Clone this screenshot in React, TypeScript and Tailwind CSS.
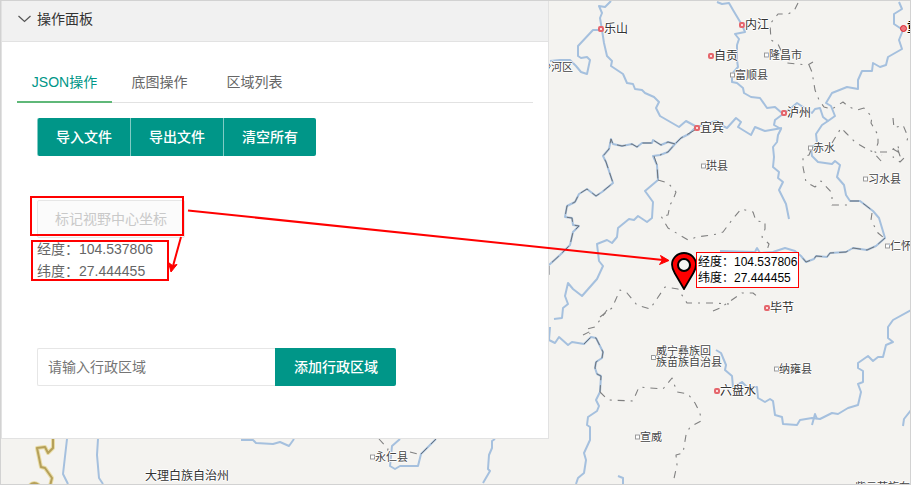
import { useState } from 'react';
import clsx from 'clsx';

type Place = { name: string; x: number; y: number; kind: 'city' | 'county' | 'capital' | 'plain'; size?: 'sm' };

// x / y is the left edge and the vertical centre of the label
const places: Place[] = [
  { name: '乐山', x: 598, y: 29, kind: 'city' },
  { name: '内江', x: 739, y: 25, kind: 'city' },
  { name: '自贡', x: 708, y: 56, kind: 'city' },
  { name: '宜宾', x: 694, y: 128, kind: 'city' },
  { name: '泸州', x: 781, y: 113, kind: 'city' },
  { name: '毕节', x: 764, y: 308, kind: 'city' },
  { name: '六盘水', x: 714, y: 391, kind: 'city' },
  { name: '重庆', x: 900, y: 28, kind: 'capital' },
  { name: '隆昌市', x: 764, y: 55, kind: 'county' },
  { name: '富顺县', x: 730, y: 75, kind: 'county' },
  { name: '赤水', x: 808, y: 148, kind: 'county' },
  { name: '习水县', x: 863, y: 179, kind: 'county' },
  { name: '珙县', x: 701, y: 166, kind: 'county' },
  { name: '仁怀', x: 885, y: 246, kind: 'county' },
  { name: '纳雍县', x: 774, y: 369, kind: 'county' },
  { name: '宣威', x: 635, y: 437, kind: 'county' },
  { name: '永仁县', x: 370, y: 457, kind: 'county' },
  { name: '威宁彝族回\n族苗族自治县', x: 651, y: 357, kind: 'county' },
  { name: '沙河区', x: 540, y: 67, kind: 'plain', size: 'sm' },
  { name: '大理白族自治州', x: 145, y: 476, kind: 'plain' },
  { name: '紫云苗族布', x: 855, y: 487, kind: 'plain', size: 'sm' },
];

const rivers = [
  '611,1 605,7 599,6 602,13 600,18 602,30 604,43 607,56 612,61 611,66 623,74 627,83 633,84 635,89 642,90 645,93 654,97 659,102 656,108 660,116 679,127 686,121 697,127 708,123 717,121 723,126 727,128 736,118 741,122 738,127 751,135 755,127 765,131 782,128',
  '601,30 593,30 578,46 578,56 581,58 587,57 590,60 587,74 581,72 576,66 570,60 560,60 550,61',
  '695,128 689,134 681,138 675,144 668,152 660,155 653,156 657,165 658,180 645,191 653,202 652,218 647,222 638,216 634,220 629,219 618,228 617,237 612,243 607,240 597,244 599,261 603,266 597,279 582,296 573,289 568,283 565,296 568,304 563,308 562,318 554,319',
  '717,2 722,4 729,3 733,10 742,25 745,32 735,34 739,39 737,45 737,60 738,67 732,74 732,82 737,83 743,88 744,93 751,97 760,98 767,108 775,107 783,114',
  '783,114 790,109 797,103 803,107 812,113 815,109 820,108 823,117 828,121 835,116 831,106 826,103 832,93 847,87 858,89 858,80 862,71 872,71 873,63 880,67 886,65 888,57 902,49 899,40 903,30 894,24 894,14 902,9 899,2',
  '828,121 822,125 816,134 817,143 811,149 812,156 818,162 832,164 835,161 840,165 837,177 844,185 846,195 850,201 860,201 873,211 879,218 885,238 876,246 867,250 853,248 846,252 830,253 827,257 816,256 814,259 806,262 801,256 795,251 785,248 773,252 760,253 757,248 755,252 720,251',
  '783,114 775,120 774,125 781,129 778,135 777,142 773,147 774,157 773,167 779,172 778,178 783,182 779,190 786,204 789,219',
  '550,327 549,340 555,343 559,337 568,345 572,342 584,344 591,337 596,338 603,352 602,358 596,362 595,368 597,374 601,376 600,392 596,400 599,406 597,411 588,417 587,425 590,427 590,440 584,453 586,460 584,473 578,478 576,484',
  '618,476 623,478 623,484',
  '716,350 721,353 726,365 725,370 732,376 733,387 742,382 747,387 757,387 758,398 765,402 770,399 773,401 775,415 782,417 783,424 797,425 800,420 812,418 820,419 832,413 838,414 848,408 858,405 861,392 858,384 863,382 863,371 858,368 858,363 868,356 873,361 878,357 883,357 886,345 893,342 888,338 888,327 893,320 911,310',
  '812,425 815,414 817,419',
  '911,410 904,419 903,426',
  '67,439 63,474 68,484',
  '98,439 97,455 99,478 103,484',
  '241,440 253,440 256,443 273,444 280,442 289,446 294,439',
  '400,439 392,446 390,466 395,469 400,466 418,466 421,454 436,439',
  '495,439 492,441 492,448 489,455 488,469 490,471 483,483',
  '675,144 668,142 661,145 653,140 652,143 642,143 637,147 632,144 622,146 613,144 611,139 609,149 603,156 606,162 613,183 602,192 596,196 587,189 579,194 575,202 567,206 565,217 572,218 573,225 579,226 573,232 570,245 560,255 549,265',
];

// administrative borders that run along a river
const riverBorders = [
  '675,144 668,142 661,145 653,140 652,143 642,143 637,147 632,144 622,146 613,144 611,139 609,149 603,156 606,162 613,183 602,192 596,196 587,189 579,194 575,202 567,206 565,217 572,218 573,225 579,226 573,232 570,245 560,255 549,265 549,275',
  '695,130 681,138 675,144 668,152 660,155',
  '850,201 860,201 873,211',
  '885,238 876,246 867,250 853,248 846,252 830,253 827,257 816,256 814,259 806,262 801,256',
  '584,344 591,337 596,338 603,352 602,358 596,362 595,368 597,374 601,376 600,392',
  '654,156 657,165 658,180',
  '421,454 436,439',
];

const borders = [
  '798,3 794,11 788,14 778,14 770,24 771,40 778,44 787,63 808,65 813,62',
  '809,65 812,72 815,90 819,100 824,107 832,109 843,102 849,107 857,110 864,108 872,117 871,123 878,135 878,143 875,152 882,155',
  '811,150 809,155 803,157 803,167 806,182 815,187 821,181 832,193 832,205 848,205',
  '832,143 841,128 846,133 855,142 865,148 873,152 882,162',
  '893,118 894,128 903,125 908,137 906,144',
  '880,152 888,152 897,147 900,156 893,157 900,162 908,154',
  '893,149 900,153 897,143',
  '872,213 871,220 878,233 884,238',
  '658,180 668,183 676,192 673,200 670,205 668,215 661,216 668,228 688,240 697,237 718,234 723,232 732,220 741,209 753,212 756,221 765,222 765,229 762,237 769,244 767,250',
  '600,317 612,308 620,290 627,293 637,305 650,309 665,287 678,289 687,303 700,303 713,303 729,304',
  '713,311 720,308 742,293 753,293 758,297',
  '607,310 595,327 587,329 590,334',
  '583,335 591,331',
  '600,392 608,400 633,401 639,387 663,389 672,378 677,392 688,394 695,403 700,413 701,421 690,427 686,435 683,453 676,455 677,465 673,483',
  '379,439 388,449 386,455',
  '410,452 421,455',
];

function Map() {
  return (
    <div className="absolute inset-0 overflow-hidden">
      <svg className="absolute inset-0 size-full" fill="none" strokeLinejoin="round" aria-hidden="true">
        <g stroke="#a5c0de" strokeWidth="2">
          {rivers.map((points) => (
            <polyline key={points} points={points} />
          ))}
        </g>
        <g stroke="#6d737a" strokeWidth="1" strokeDasharray="9 5">
          {riverBorders.map((points) => (
            <polyline key={points} points={points} />
          ))}
        </g>
        <g stroke="#808080" strokeWidth="1.1" strokeDasharray="7 6 2 6">
          {borders.map((points) => (
            <polyline key={points} points={points} />
          ))}
        </g>
        <g stroke="#e9dca6" strokeWidth="4">
          <path d="M53 436V448L48 453L45 447L37 448L41 467L45 468L52 478L50 486M30 485Q34 481 39 485" />
        </g>
        <g stroke="#b5a05a" strokeWidth="2">
          <path d="M53 436V448L48 453L45 447L37 448L41 467L45 468L52 478L50 486M30 485Q34 481 39 485" />
        </g>
      </svg>

      {places.map((p) => (
        <div
          key={p.name}
          className={clsx(
            'absolute flex -translate-y-1/2 items-center whitespace-pre',
            '[text-shadow:1px_0_#fff,-1px_0_#fff,0_1px_#fff,0_-1px_#fff]',
            p.kind === 'county' || p.size === 'sm'
              ? 'text-[11px] leading-[11px] text-[#444]'
              : 'text-xs leading-3 text-[#333]',
            p.kind === 'capital' && 'font-bold text-black',
          )}
          style={{ left: p.x, top: p.y }}
        >
          {p.kind === 'city' && <i className="size-1.5 rounded-xs border-2 border-[#e5666c] bg-[#fbdcdd]" />}
          {p.kind === 'county' && <i className="size-[5px] border border-[#999] bg-white" />}
          {p.kind === 'capital' && <i className="size-[7px] rounded-full border border-[#d9252e] bg-[#f0777d]" />}
          <span>{p.name}</span>
        </div>
      ))}
    </div>
  );
}

function Marker({ lng, lat }: { lng: string; lat: string }) {
  return (
    <div className="absolute top-[252px] left-[671px] flex items-start">
      <svg width="25" height="38" viewBox="0 0 25 38" aria-hidden="true">
        <path
          d="M13 1C6.300 1 1 6.200 1 12.500C1 15.800 2.200 18.500 3.800 21.200L13 37L22.200 21.200C23.800 18.500 25 15.800 25 12.500C25 6.200 19.700 1 13 1Z"
          fill="#f00"
          stroke="#000"
          strokeWidth="1.8"
        />
        <circle cx="13" cy="13" r="6" fill="#f4f3f0" stroke="#000" strokeWidth="2" />
      </svg>
      <div className="border border-[#f00] bg-white p-px text-xs leading-4 whitespace-nowrap text-black">
        <p>经度：{lng}</p>
        <p>纬度：{lat}</p>
      </div>
    </div>
  );
}

function Arrows() {
  return (
    <svg className="pointer-events-none absolute inset-0 size-full" aria-hidden="true">
      <g stroke="#f00" strokeWidth="2" fill="#f00">
        <path d="M188 210.500L663 260" />
        <path d="M181 237L173 266" />
        <path d="M669 260.500L659.500 264.500L662.500 260L660.500 255.500Z" strokeWidth="1" />
        <path d="M171 272L168.500 262.500L172.500 265.500L177 264.500Z" strokeWidth="1" />
      </g>
    </svg>
  );
}

const tabs = ['JSON操作', '底图操作', '区域列表'];
const actions = ['导入文件', '导出文件', '清空所有'];

export default function App() {
  const [active, setActive] = useState(0);
  const [open, setOpen] = useState(true);
  const [region, setRegion] = useState('');
  const lng = '104.537806';
  const lat = '27.444455';

  return (
    <div className="relative h-screen w-full overflow-hidden bg-[#f4f3f0] pl-px font-['Liberation_Sans','Noto_Sans_CJK_SC',sans-serif] text-sm">
      <Map />
      <Marker lng={lng} lat={lat} />

      <section className="relative w-[548px] max-w-full border border-[#e2e2e2] bg-white text-[#666]">
        <h2>
          <button
            type="button"
            aria-expanded={open}
            onClick={() => setOpen(!open)}
            className="flex h-10 w-full items-center gap-1.5 bg-[#f1f1f1] px-4 pb-1 text-[#333]"
          >
            <svg width="13" height="8" viewBox="0 0 13 8" fill="none" stroke="#555" strokeWidth="1.2" aria-hidden="true">
              <path d="M0.500 1L6.500 6.500L12.500 1" />
            </svg>
            操作面板
          </button>
        </h2>

        {open && (
          <div className="border-t border-[#e2e2e2] px-[15px] pt-5 pb-[52px]">
            <div role="tablist" className="flex border-b border-[#e2e2e2]">
              {tabs.map((tab, i) => (
                <button
                  key={tab}
                  type="button"
                  role="tab"
                  aria-selected={i === active}
                  onClick={() => setActive(i)}
                  className={clsx(
                    '-mb-px h-[41px] w-[95px] border-b-2',
                    i === active ? 'border-[#5fb878] text-[#009688]' : 'border-transparent',
                  )}
                >
                  {tab}
                </button>
              ))}
            </div>

            <div className="px-5 pt-[15px]">
              <div className="flex">
                {actions.map((label) => (
                  <button
                    key={label}
                    type="button"
                    className="h-[38px] border-l border-white/50 bg-[#009688] px-[18px] font-medium text-white first:rounded-l-xs last:rounded-r-xs"
                  >
                    {label}
                  </button>
                ))}
              </div>

              <div className="relative mt-11 w-fit">
                <button
                  type="button"
                  disabled
                  className="h-[38px] rounded-xs border border-[#e6e6e6] bg-[#fbfbfb] px-[17px] text-[#c9c9c9]"
                >
                  标记视野中心坐标
                </button>
                <div className="pointer-events-none absolute -top-1 right-px bottom-0.5 -left-[7px] border-2 border-[#f00]" />
              </div>

              <div className="relative w-fit pr-4 leading-[22px]">
                <p>经度：{lng}</p>
                <p>纬度：{lat}</p>
                <div className="pointer-events-none absolute top-0.5 right-0 bottom-px -left-1.5 border-2 border-[#f00]" />
              </div>

              <form className="mt-[66px] flex" onSubmit={(e) => e.preventDefault()}>
                <input
                  aria-label="行政区域"
                  placeholder="请输入行政区域"
                  value={region}
                  onChange={(e) => setRegion(e.target.value)}
                  className="h-[38px] w-[238px] rounded-l-xs border border-r-0 border-[#e6e6e6] px-2.5 outline-none placeholder:text-[#757575]"
                />
                <button
                  type="submit"
                  className="h-[38px] rounded-r-xs border-l border-[#009688] bg-[#009688] px-[18px] font-medium text-white"
                >
                  添加行政区域
                </button>
              </form>
            </div>
          </div>
        )}
      </section>

      <Arrows />
      <div className="pointer-events-none absolute inset-0 border border-[#d2d2d2]" />
    </div>
  );
}
